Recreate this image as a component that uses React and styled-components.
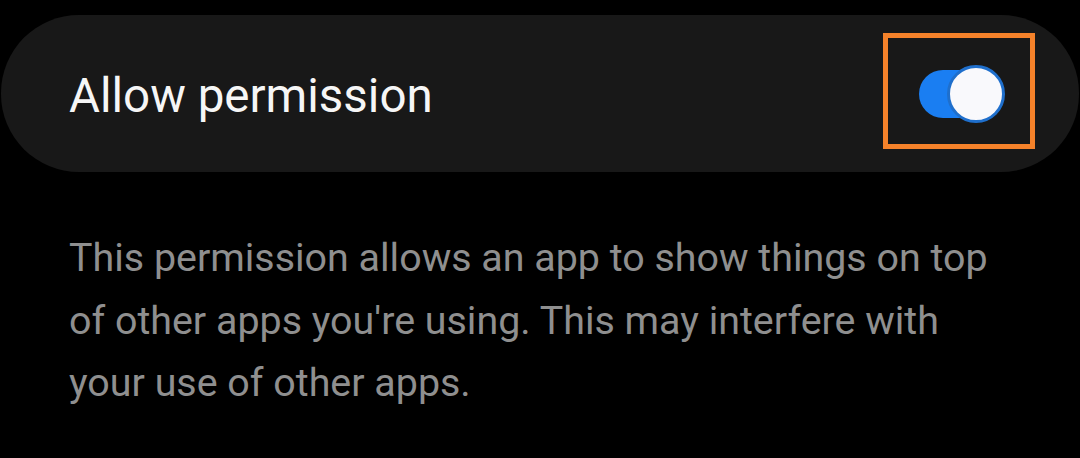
import styled, { createGlobalStyle } from "styled-components";

const GlobalStyle = createGlobalStyle`
  html, body {
    margin: 0;
    padding: 0;
    background: #000;
  }
  body {
    font-family: Roboto, "Noto Sans", sans-serif;
    -webkit-font-smoothing: antialiased;
  }
`;

const Page = styled.div`
  width: 1080px;
  height: 458px;
  background: #000;
  padding: 15px 1px 0;
  box-sizing: border-box;
  overflow: hidden;
`;

const Card = styled.div`
  height: 157px;
  background: #181818;
  border-radius: 78px;
  display: flex;
  align-items: center;
  justify-content: space-between;
  padding: 0 44px 0 68px;
`;

const Title = styled.span`
  color: #f6f6f6;
  font-size: 47.5px;
  margin-top: 4px;
`;

const Highlight = styled.div`
  width: 152px;
  height: 116px;
  margin-bottom: 5px;
  padding-top: 6px;
  box-sizing: border-box;
  border: 5px solid #f5822a;
  display: flex;
  align-items: center;
  justify-content: center;
`;

const Track = styled.div`
  position: relative;
  width: 81px;
  height: 48px;
  border-radius: 24px;
  background: ${(p) => (p.$on ? "#1a7ef2" : "#555")};
`;

const Thumb = styled.div`
  position: absolute;
  top: -5px;
  right: -5px;
  width: 58px;
  height: 58px;
  box-sizing: border-box;
  border-radius: 50%;
  background: #f9f9fc;
  border: 3px solid #1f6fcc;
`;

const Description = styled.p`
  margin: 55px 0 0;
  padding: 0 70px 0 68px;
  color: #8f8f8f;
  font-size: 39.4px;
  line-height: 62.5px;
`;

export default function App() {
  return (
    <>
      <GlobalStyle />
      <Page>
        <Card>
          <Title>Allow permission</Title>
          <Highlight>
            <Track $on>
              <Thumb />
            </Track>
          </Highlight>
        </Card>
        <Description>
          This permission allows an app to show things on top of other apps
          you're using. This may interfere with your use of other apps.
        </Description>
      </Page>
    </>
  );
}
